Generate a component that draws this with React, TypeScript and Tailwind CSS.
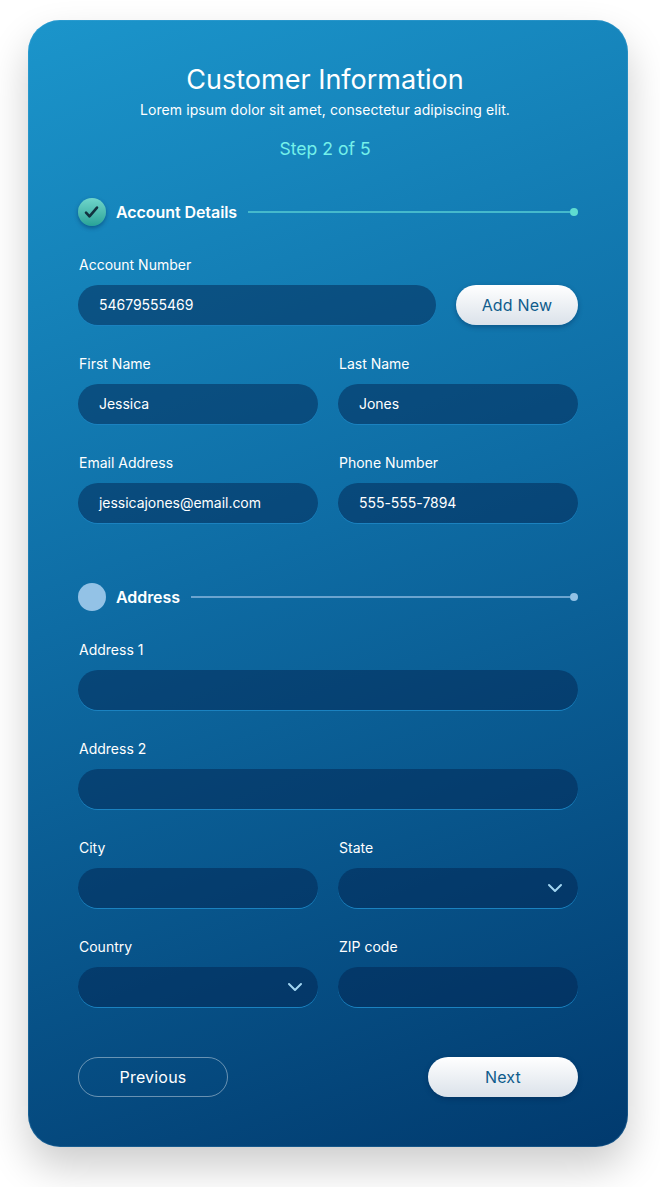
import React from "react";
import { ChevronDown } from "lucide-react";

const inputClass =
    "h-10 w-full rounded-full bg-[#02244f]/50 shadow-[0_1px_0_#1b82c0] px-[21px] flex items-center text-sm tracking-[-0.03px] text-white";

const lightButton =
    "w-[150px] h-10 rounded-full bg-gradient-to-b from-white to-[#dbe2ea] shadow-[0_2px_5px_rgba(0,30,70,0.35)] text-base tracking-[0.2px] text-[#0f5c8c]";

interface FieldProps {
    label: string;
    value?: string;
    select?: boolean;
    className?: string;
}

function Field({ label, value, select, className }: FieldProps) {
    return (
        <div className={className}>
            <div className="h-5 leading-5 pl-px mb-2.5 text-sm text-white">{label}</div>
            <div className={`${inputClass} relative`}>
                {value}
                {select && (
                    <ChevronDown
                        size={24}
                        strokeWidth={2}
                        className="absolute right-[11px] top-[8px] text-[#a3d6f2]"
                    />
                )}
            </div>
        </div>
    );
}

function SectionHeader({ title, done }: { title: string; done?: boolean }) {
    return (
        <div className="flex items-center h-7">
            {done ? (
                <div className="w-7 h-7 rounded-full bg-gradient-to-b from-[#6fd6cb] to-[#27a397] shadow-[0_2px_4px_rgba(0,40,80,0.45)] flex items-center justify-center">
                    <svg width="16" height="16" viewBox="0 0 16 16" fill="none">
                        <path
                            d="M2 8.6 L5.5 12.4 L13 3.6"
                            stroke="#12323f"
                            strokeWidth="2.6"
                            strokeLinecap="round"
                            strokeLinejoin="round"
                        />
                    </svg>
                </div>
            ) : (
                <div className="w-7 h-7 rounded-full bg-[#93c2e6]" />
            )}
            <span className="ml-2.5 text-base font-semibold tracking-[-0.07px] text-white">{title}</span>
            <div className={`ml-[11px] flex-1 h-0.5 ${done ? "bg-[#45b9cc]" : "bg-[#6ba4cf]"}`} />
            <div className={`w-2 h-2 rounded-full ${done ? "bg-[#5fdcd0]" : "bg-[#93c2e6]"}`} />
        </div>
    );
}

export default function App() {
    return (
        <div className="w-[660px] h-[1187px] bg-white pt-5 pl-7 overflow-hidden font-['Inter',sans-serif]">
            <div className="w-[600px] h-[1127px] rounded-[32px] bg-[linear-gradient(160deg,#1b95cb_0%,#0e6ca4_46%,#013a6e_100%)] shadow-[0_20px_40px_rgba(0,0,0,0.2),inset_0_0_0_1px_rgba(110,190,235,0.18)] px-[50px] pt-[43px]">
                <div className="text-center text-white pr-[6px]">
                    <h1 className="text-[27px] leading-[34px] font-normal">Customer Information</h1>
                    <p className="text-sm leading-5 mt-[3px] tracking-[0.08px]">
                        Lorem ipsum dolor sit amet, consectetur adipiscing elit.
                    </p>
                    <p className="text-[17.6px] leading-6 mt-[17px] text-[#74f0ea]">Step 2 of 5</p>
                </div>

                <div className="mt-[37px]">
                    <SectionHeader title="Account Details" done />
                </div>
                <div className="mt-[29px] flex gap-5 items-end">
                    <Field label="Account Number" value="54679555469" className="flex-1" />
                    <button className={`${lightButton} !w-[122px]`}>Add New</button>
                </div>
                <div className="mt-[29px] grid grid-cols-2 gap-x-5 gap-y-[29px]">
                    <Field label="First Name" value="Jessica" />
                    <Field label="Last Name" value="Jones" />
                    <Field label="Email Address" value="jessicajones@email.com" />
                    <Field label="Phone Number" value="555-555-7894" />
                </div>

                <div className="mt-[60px]">
                    <SectionHeader title="Address" />
                </div>
                <div className="mt-[29px] grid grid-cols-2 gap-x-5 gap-y-[29px]">
                    <Field label="Address 1" className="col-span-2" />
                    <Field label="Address 2" className="col-span-2" />
                    <Field label="City" />
                    <Field label="State" select />
                    <Field label="Country" select />
                    <Field label="ZIP code" />
                </div>

                <div className="mt-[50px] flex justify-between">
                    <button className="w-[150px] h-10 rounded-full border border-white/40 text-base tracking-[0.2px] text-white">
                        Previous
                    </button>
                    <button className={lightButton}>Next</button>
                </div>
            </div>
        </div>
    );
}
